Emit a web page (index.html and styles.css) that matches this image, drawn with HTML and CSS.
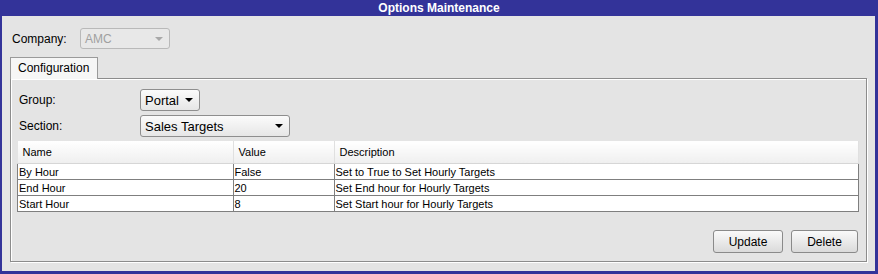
FILE: index.html
```html
<!DOCTYPE html>
<html lang="en">
<head>
  <meta charset="UTF-8" />
  <title>Options Maintenance</title>
  <link rel="stylesheet" href="styles.css">
</head>
<body>
  <div class="window">
    <div class="title">Options Maintenance</div>
    <div class="content">
      <div class="company-row">
        <label>Company:</label>
        <div class="combo disabled company"><span>AMC</span><i class="arrow"></i></div>
      </div>

      <div class="tabs">
        <div class="tab">Configuration</div>
      </div>
      <div class="panel">
        <div class="field-row">
          <label>Group:</label>
          <div class="combo group"><span>Portal</span><i class="arrow"></i></div>
        </div>
        <div class="field-row">
          <label>Section:</label>
          <div class="combo section"><span>Sales Targets</span><i class="arrow"></i></div>
        </div>

        <table class="grid">
          <thead>
            <tr>
              <th class="c-name">Name</th>
              <th class="c-value">Value</th>
              <th class="c-desc">Description</th>
            </tr>
          </thead>
          <tbody>
            <tr><td>By Hour</td><td>False</td><td>Set to True to Set Hourly Targets</td></tr>
            <tr><td>End Hour</td><td>20</td><td>Set End hour for Hourly Targets</td></tr>
            <tr><td>Start Hour</td><td>8</td><td>Set Start hour for Hourly Targets</td></tr>
          </tbody>
        </table>

        <div class="buttons">
          <button class="btn update">Update</button>
          <button class="btn delete">Delete</button>
        </div>
      </div>
    </div>
  </div>
</body>
</html>
```

FILE: styles.css
```css
body {
  margin: 0;
  font-family: 'Liberation Sans', Arial, sans-serif;
  font-size: 12px;
  color: #000;
  background: #e4e4e4;
}
.window {
  width: 878px;
  height: 274px;
  box-sizing: border-box;
  display: flex;
  flex-direction: column;
  background: #333399;
}
.title {
  height: 16px;
  line-height: 16px;
  text-align: center;
  color: #fff;
  font-weight: bold;
  font-size: 12px;
  flex: none;
}
.content {
  flex: 1;
  margin: 0 3px 3px 2px;
  background: #e4e4e4;
  padding: 12px 0 0 8px;
}
.company-row {
  display: flex;
  align-items: center;
  padding-left: 2px;
}
.company-row label {
  width: 68px;
}
.combo {
  box-sizing: border-box;
  height: 22px;
  border: 1px solid #8e8e8e;
  border-radius: 3px;
  background: linear-gradient(#fbfbfb, #e6e6e6);
  display: flex;
  align-items: center;
  padding-left: 4px;
  position: relative;
  font-size: 13px;
}
.combo .arrow {
  position: absolute;
  right: 6px;
  top: 8px;
  width: 0;
  height: 0;
  border-left: 4px solid transparent;
  border-right: 4px solid transparent;
  border-top: 4px solid #000;
}
.combo.disabled {
  border-color: #b9b9b9;
  background: #e8e8e8;
  color: #a0a0a0;
  font-size: 12px;
}
.combo.disabled .arrow {
  border-top-color: #a8a8a8;
  right: 6px;
}
.company {
  width: 90px;
  height: 21px;
}
.tabs {
  display: flex;
  margin-top: 8px;
}
.tab {
  box-sizing: border-box;
  width: 88px;
  height: 22px;
  line-height: 20px;
  padding-left: 7px;
  border: 1px solid #9a9a9a;
  border-bottom: none;
  background: #f6f6f6;
  font-size: 12px;
  position: relative;
  z-index: 1;
  margin-bottom: -1px;
}
.panel {
  box-sizing: border-box;
  width: 857px;
  height: 184px;
  border: 1px solid #8c8c8c;
  box-shadow: 1px 1px 0 #fff, inset 1px 1px 0 #fff;
  padding: 10px 8px 0 6px;
}
.field-row {
  display: flex;
  align-items: center;
  height: 22px;
  margin-bottom: 4px;
  padding-left: 2px;
}
.field-row label {
  width: 121px;
}
.group {
  width: 60px;
}
.section {
  width: 150px;
}
.grid {
  border-collapse: collapse;
  width: 842px;
  font-size: 11px;
  margin-top: 2px;
  table-layout: fixed;
}
.grid th {
  height: 22px;
  text-align: left;
  font-weight: normal;
  padding: 0 0 0 5px;
  background: linear-gradient(#ffffff, #efefef);
  border-right: 1px solid #e0e0e0;
  border-bottom: 1px solid #d6d6d6;
}
.grid .c-name { width: 210px; }
.grid .c-value { width: 95px; }
.grid td {
  height: 15px;
  padding: 0 0 0 1px;
  background: #fff;
  border: 1px solid #7f7f7f;
  white-space: nowrap;
}
.buttons {
  display: flex;
  justify-content: flex-end;
  gap: 8px;
  margin-top: 18px;
}
.btn {
  font-family: 'Liberation Sans', Arial, sans-serif;
  font-size: 12px;
  height: 23px;
  border: 1px solid #8a8a8a;
  border-radius: 3px;
  background: linear-gradient(#fafafa, #dadada);
  color: #000;
  padding: 0;
}
.update { width: 70px; }
.delete { width: 67px; }
```
